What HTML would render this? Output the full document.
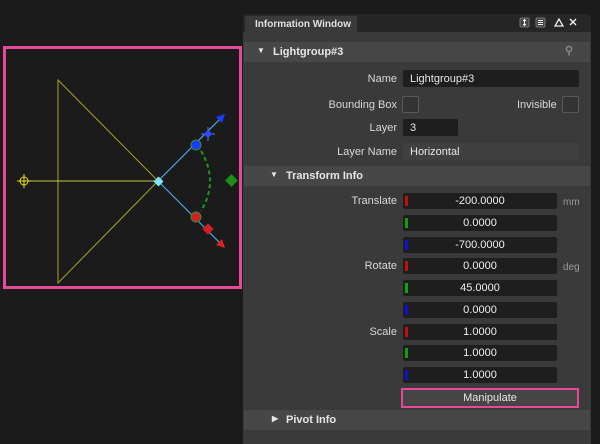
<!DOCTYPE html>
<html><head><style>
*{margin:0;padding:0;box-sizing:border-box}
body{width:600px;height:436px;background:#1b1b1b;font-family:"Liberation Sans",sans-serif;font-size:11px;color:#ddd;position:relative;overflow:hidden}
.a{position:absolute}
.panel{left:243px;top:14px;width:348px;height:430px;background:#3a3a3a;border-radius:3px 3px 0 0}
.tabbar{left:243px;top:14px;width:348px;height:18px;background:#262626;border-radius:3px 3px 0 0}
.tab{left:245px;top:16px;width:112px;height:16px;background:#3a3a3a;color:#e0e0e0;font-weight:bold;font-size:10px;padding:3px 0 0 10px}
.hdr{left:244px;width:346px;height:20px;background:#474747;font-weight:bold;color:#e6e6e6;font-size:11px}
.lbl{text-align:right;width:150px;left:247px;color:#d8d8d8}
.inp{background:#1e1e1e;border-radius:2px;color:#e6e6e6}
.num{left:403px;width:154px;height:16px;background:#1e1e1e;border-radius:2px;text-align:center;color:#eee;line-height:16px}
.bar{position:absolute;left:2px;top:3px;width:3px;height:10px}
.cb{width:17px;height:17px;border:1px solid #5a5a5a;background:#333;border-radius:2px}
.tri{position:absolute;top:4px;font-size:8px}
</style></head><body>
<svg class="a" style="left:0;top:0" width="243" height="300">
<rect x="4.5" y="47.5" width="236" height="240" fill="#1b1b1b" stroke="#e8489a" stroke-width="3"/>
<g stroke="#a7a22a" stroke-width="1" fill="none">
<path d="M58 80 L58 283 L158 181 Z"/>
<path d="M24 181 L158 181" stroke="#c8c43a"/>
</g>
<g stroke="#e6e020" fill="none"><circle cx="24" cy="181" r="4"/><path d="M17 181h14M24 174v14"/></g>
<path d="M158 181 L222 117" stroke="#4aa8e8" stroke-width="1.2"/>
<path d="M158 181 L222 245" stroke="#4aa8e8" stroke-width="1.2"/>
<path d="M225 114 l-9 3 l6 6z" fill="#1a3cff"/>
<path d="M225 248 l-9 -3 l6 -6z" fill="#e02020"/>
<circle cx="196" cy="145" r="5" fill="#1a3cff" stroke="#3a8a3a"/>
<path d="M201 134h14M208 127v14" stroke="#7070e0"/><rect x="205" y="131" width="6" height="6" fill="#2a4cff" transform="rotate(45 208 134)"/>
<circle cx="196" cy="217" r="5" fill="#d02020" stroke="#3a8a3a"/>
<rect x="204" y="225" width="8" height="8" fill="#d02020" transform="rotate(45 208 229)"/>
<path d="M201 151 Q219 181 201 211" stroke="#1a9a1a" stroke-width="2" stroke-dasharray="4 3" fill="none"/>
<rect x="227" y="176" width="9" height="9" fill="#1a8f1a" transform="rotate(45 231.5 180.5)"/>
<rect x="155" y="178" width="7" height="7" fill="#7ee8f0" transform="rotate(45 158.5 181.5)"/>
</svg>
<div class="a panel"></div>
<div class="a tabbar"></div>
<div class="a tab">Information Window</div>
<svg class="a" style="left:518px;top:16px" width="62" height="14">
<rect x="2" y="2" width="9" height="9" rx="1.5" fill="#444" stroke="#777"/><path d="M6.5 3.5v6M5 5l1.5-1.5L8 5M5 8l1.5 1.5L8 8" stroke="#eee" fill="none"/>
<rect x="18" y="2" width="9" height="9" rx="1.5" fill="#444" stroke="#777"/><path d="M20 4.5h5M20 6.5h5M20 8.5h5" stroke="#eee"/>
<path d="M37 10h8l-4-7z" stroke="#eee" stroke-width="1.3" fill="none"/>
<path d="M52 3l6 6M58 3l-6 6" stroke="#eee" stroke-width="1.4"/>
</svg>
<div class="a hdr" style="top:42px"><span class="tri" style="left:13px">▼</span><span class="a" style="left:29px;top:4px">Lightgroup#3</span><span class="a" style="left:321px;top:2px;color:#888">⚲</span></div>
<div class="a lbl" style="top:73px">Name</div>
<div class="a inp" style="left:403px;top:70px;width:176px;height:17px;padding:3px 0 0 7px">Lightgroup#3</div>
<div class="a lbl" style="top:99px">Bounding Box</div>
<div class="a cb" style="left:402px;top:96px"></div>
<div class="a" style="left:517px;top:99px;color:#d8d8d8">Invisible</div>
<div class="a cb" style="left:562px;top:96px"></div>
<div class="a lbl" style="top:122px">Layer</div>
<div class="a inp" style="left:403px;top:119px;width:55px;height:17px;padding:3px 0 0 7px">3</div>
<div class="a lbl" style="top:146px">Layer Name</div>
<div class="a" style="left:403px;top:143px;width:176px;height:17px;background:#404040;padding:3px 0 0 7px;color:#e6e6e6">Horizontal</div>
<div class="a hdr" style="top:166px"><span class="tri" style="left:26px">▼</span><span class="a" style="left:42px;top:4px">Transform Info</span></div>
<div class="a lbl" style="top:195px">Translate</div>
<div class="a lbl" style="top:260px">Rotate</div>
<div class="a lbl" style="top:326px">Scale</div>
<div class="a" style="left:563px;top:197px;color:#999;font-size:10px">mm</div>
<div class="a" style="left:563px;top:262px;color:#999;font-size:10px">deg</div>
<div class="a num" style="top:193px"><i class="bar" style="background:#c01010"></i>-200.0000</div>
<div class="a num" style="top:215px"><i class="bar" style="background:#10a010"></i>0.0000</div>
<div class="a num" style="top:237px"><i class="bar" style="background:#1010d0"></i>-700.0000</div>
<div class="a num" style="top:258px"><i class="bar" style="background:#c01010"></i>0.0000</div>
<div class="a num" style="top:280px"><i class="bar" style="background:#10a010"></i>45.0000</div>
<div class="a num" style="top:302px"><i class="bar" style="background:#1010d0"></i>0.0000</div>
<div class="a num" style="top:324px"><i class="bar" style="background:#c01010"></i>1.0000</div>
<div class="a num" style="top:345px"><i class="bar" style="background:#10a010"></i>1.0000</div>
<div class="a num" style="top:367px"><i class="bar" style="background:#1010d0"></i>1.0000</div>
<div class="a" style="left:401px;top:388px;width:178px;height:20px;border:2px solid #e8489a;background:#454545;text-align:center;line-height:16px;color:#e6e6e6">Manipulate</div>
<div class="a hdr" style="top:410px"><span class="tri" style="left:28px">▶</span><span class="a" style="left:42px;top:4px">Pivot Info</span></div>
</body></html>
